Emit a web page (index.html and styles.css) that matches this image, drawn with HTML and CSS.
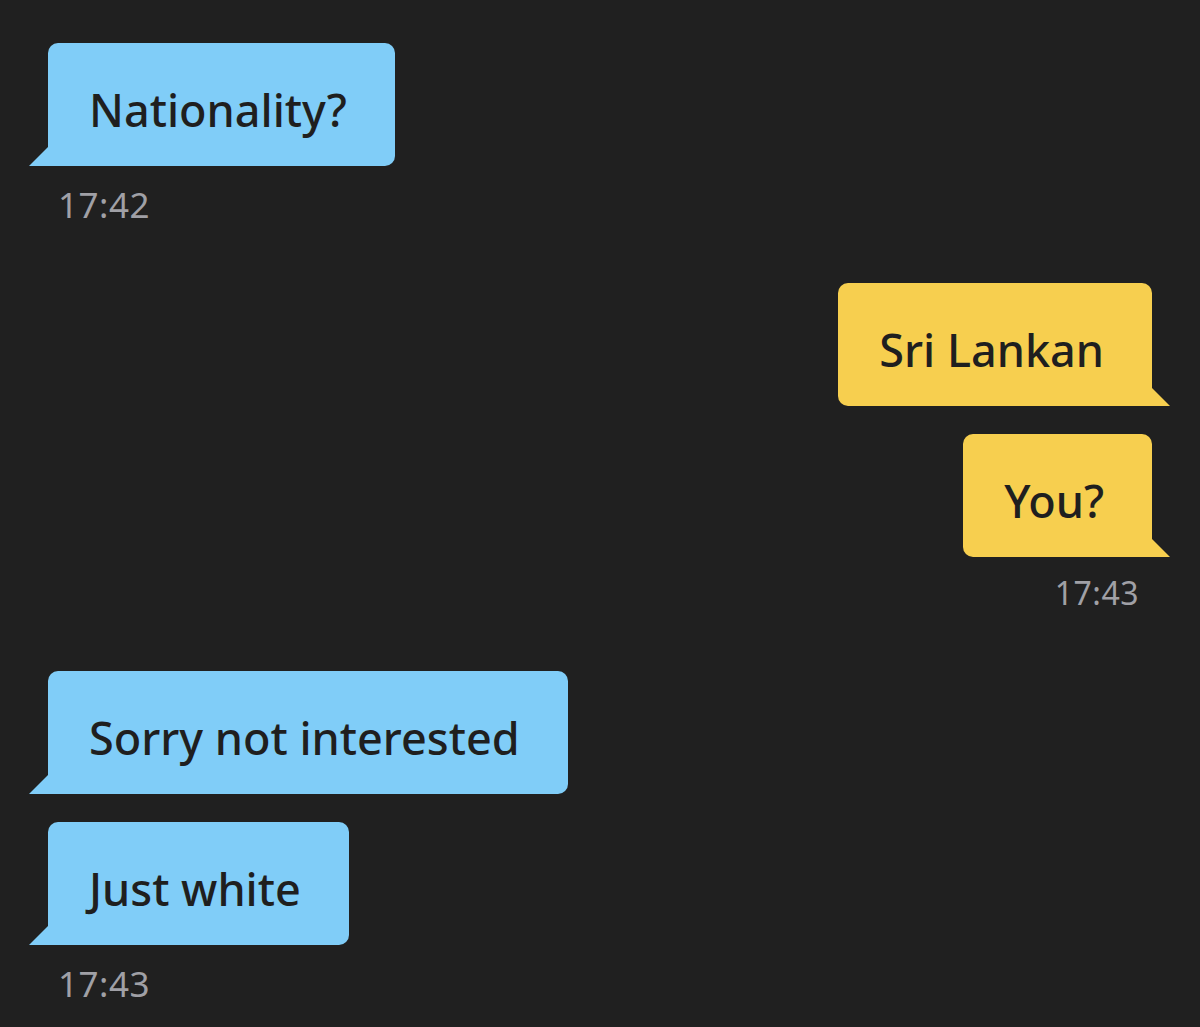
FILE: index.html
```html
<!DOCTYPE html>
<html lang="en">

<head>
    <meta charset="UTF-8">
    <meta name="viewport" content="width=device-width, initial-scale=1.0">
    <title>Chat</title>
    <link rel="stylesheet" href="styles.css">
</head>

<body>
    <div class="chat">

        <div class="group them">
            <div class="bubble">Nationality?</div>
            <p class="time">17:42</p>
        </div>

        <div class="group me">
            <div class="bubble">Sri Lankan</div>
            <div class="bubble">You?</div>
            <p class="time">17:43</p>
        </div>

        <div class="group them">
            <div class="bubble">Sorry not interested</div>
            <div class="bubble">Just white</div>
            <p class="time">17:43</p>
        </div>

    </div>
</body>

</html>
```

FILE: styles.css
```css
* {
    margin: 0px;
    padding: 0px;
    box-sizing: border-box;
}

body {
    background-color: #202020;
    font-family: "Noto Sans", "Open Sans", Arial, sans-serif;
    height: 100vh;
}

.chat {
    display: flex;
    flex-direction: column;
    padding: 43px 48px 0px 48px;
    gap: 58px;
}

.group {
    display: flex;
    flex-direction: column;
    gap: 28px;
}

.them {
    align-items: flex-start;
}

.me {
    align-items: flex-end;
}

.bubble {
    position: relative;
    height: 123px;
    display: flex;
    align-items: center;
    padding: 9px 48px 0px 41px;
    font-size: 45px;
    font-weight: 500;
    color: #1f1f1f;
    border-radius: 10px;
}

.them .bubble {
    background-color: #80cdf8;
    border-bottom-left-radius: 0px;
}

.me .bubble {
    background-color: #f7cf4f;
    border-bottom-right-radius: 0px;
}

/* little tails */
.them .bubble::before {
    content: "";
    position: absolute;
    left: -19px;
    bottom: 0px;
    border-bottom: 19px solid #80cdf8;
    border-left: 19px solid transparent;
}

.me .bubble::before {
    content: "";
    position: absolute;
    right: -18px;
    bottom: 0px;
    border-bottom: 18px solid #f7cf4f;
    border-right: 18px solid transparent;
}

.time {
    font-size: 35px;
    line-height: 40px;
    letter-spacing: 0.5px;
    color: #a0a0a6;
    margin-top: -9px;
}

.them .time {
    margin-left: 10px;
}

.me .time {
    font-size: 32px;
    margin-top: -12px;
    margin-right: 13px;
}
```
